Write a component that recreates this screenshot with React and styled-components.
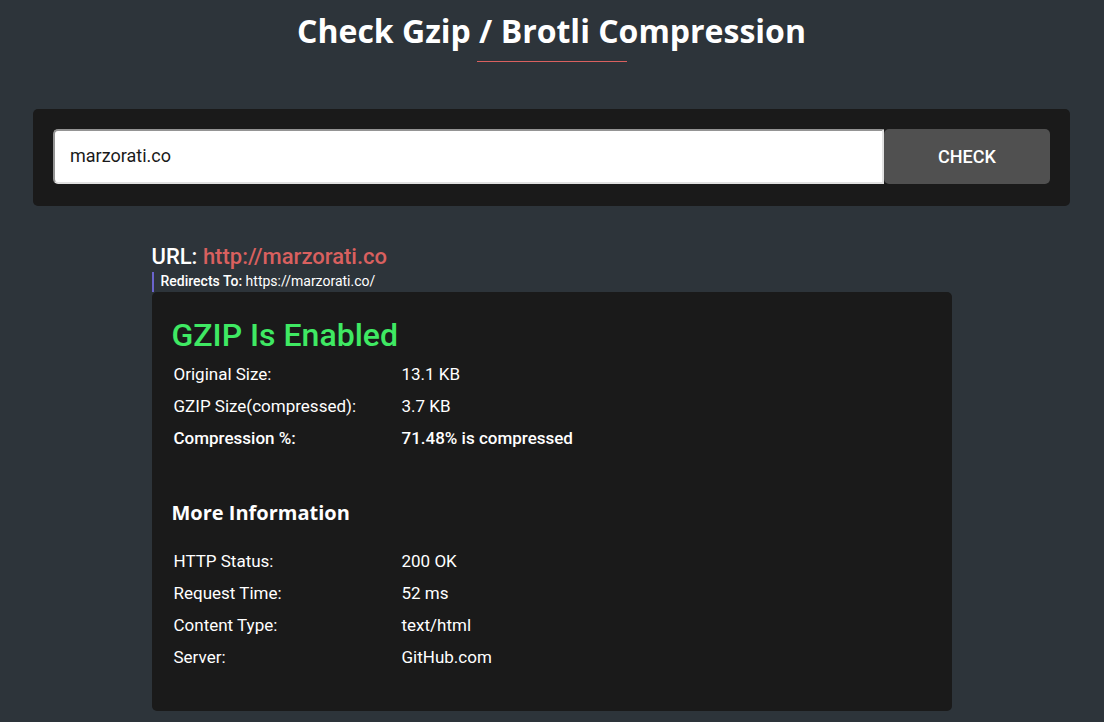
import React from "react";
import styled, { createGlobalStyle } from "styled-components";

const GlobalStyle = createGlobalStyle`
  *, *::before, *::after { box-sizing: border-box; }
  body {
    margin: 0;
    background: #2d343a;
    color: #fff;
    font: 17px/20px Roboto, sans-serif;
  }
`;

const Page = styled.main`
  padding: 8px 34px 11px 33px;
`;

const Title = styled.h1`
  margin: 0;
  font: 700 32px/46px "Open Sans", sans-serif;
  text-align: center;
  &::after {
    content: "";
    display: block;
    width: 150px;
    height: 1px;
    margin: 7px auto 0;
    background: #d9605f;
  }
`;

const SearchForm = styled.form`
  display: flex;
  margin-top: 47px;
  padding: 20px 20px 22px;
  border-radius: 5px;
  background: #1a1a1a;
`;

const UrlInput = styled.input`
  flex: 1;
  min-width: 0;
  height: 55px;
  padding: 0 15px 2px;
  border: 2px solid;
  border-color: #949494 #e1e1e1 #e1e1e1 #949494;
  border-radius: 5px 0 0 5px;
  background: #fff;
  color: #1a1a1a;
  font: 18px/20px Roboto, sans-serif;
`;

const CheckButton = styled.button`
  width: 166px;
  border: 0;
  border-radius: 5px;
  background: #505050;
  color: #fff;
  font: 500 18px/20px Roboto, sans-serif;
`;

const Results = styled.section`
  max-width: 800px;
  margin: 36px auto 0;
`;

const UrlHeading = styled.h2`
  margin: 0;
  font: 500 22px/30px Roboto, sans-serif;
`;

const UrlLink = styled.a`
  color: #d9605f;
  text-decoration: none;
`;

const Redirect = styled.p`
  margin: 0;
  padding: 0 0 2px 7px;
  border-left: 2px solid #6a64cd;
  font-size: 14px;
  line-height: 18px;
`;

const RedirectLabel = styled.strong`
  font-weight: 500;
`;

const Card = styled.div`
  padding: 20px 20px 38px;
  border-radius: 5px;
  background: #1a1a1a;
`;

const Status = styled.h2`
  margin: 0;
  color: #3fe963;
  font: 500 32px/46px Roboto, sans-serif;
`;

const Subheading = styled.h3`
  margin: 44px 0 17px;
  font: 700 20px/30px "Open Sans", sans-serif;
`;

const DataTable = styled.table`
  width: 100%;
  border-collapse: collapse;
  table-layout: fixed;
`;

const Label = styled.th`
  width: 228px;
  padding: 6px 2px;
  font-weight: ${(p) => (p.$strong ? 500 : 400)};
  text-align: left;
`;

const Value = styled.td`
  padding: 6px 2px;
  font-weight: ${(p) => (p.$strong ? 500 : 400)};
`;

const compression = [
  ["Original Size:", "13.1 KB"],
  ["GZIP Size(compressed):", "3.7 KB"],
  ["Compression %:", "71.48% is compressed", true],
];

const details = [
  ["HTTP Status:", "200 OK"],
  ["Request Time:", "52 ms"],
  ["Content Type:", "text/html"],
  ["Server:", "GitHub.com"],
];

function Facts({ rows }) {
  return (
    <DataTable>
      <tbody>
        {rows.map(([label, value, strong]) => (
          <tr key={label}>
            <Label scope="row" $strong={strong}>{label}</Label>
            <Value $strong={strong}>{value}</Value>
          </tr>
        ))}
      </tbody>
    </DataTable>
  );
}

export default function App() {
  return (
    <Page>
      <GlobalStyle />
      <Title>Check Gzip / Brotli Compression</Title>
      <SearchForm onSubmit={(e) => e.preventDefault()}>
        <UrlInput type="text" aria-label="Website URL" defaultValue="marzorati.co" />
        <CheckButton type="submit">CHECK</CheckButton>
      </SearchForm>
      <Results>
        <UrlHeading>
          URL: <UrlLink href="http://marzorati.co">http://marzorati.co</UrlLink>
        </UrlHeading>
        <Redirect>
          <RedirectLabel>Redirects To:</RedirectLabel> https://marzorati.co/
        </Redirect>
        <Card>
          <Status>GZIP Is Enabled</Status>
          <Facts rows={compression} />
          <Subheading>More Information</Subheading>
          <Facts rows={details} />
        </Card>
      </Results>
    </Page>
  );
}
